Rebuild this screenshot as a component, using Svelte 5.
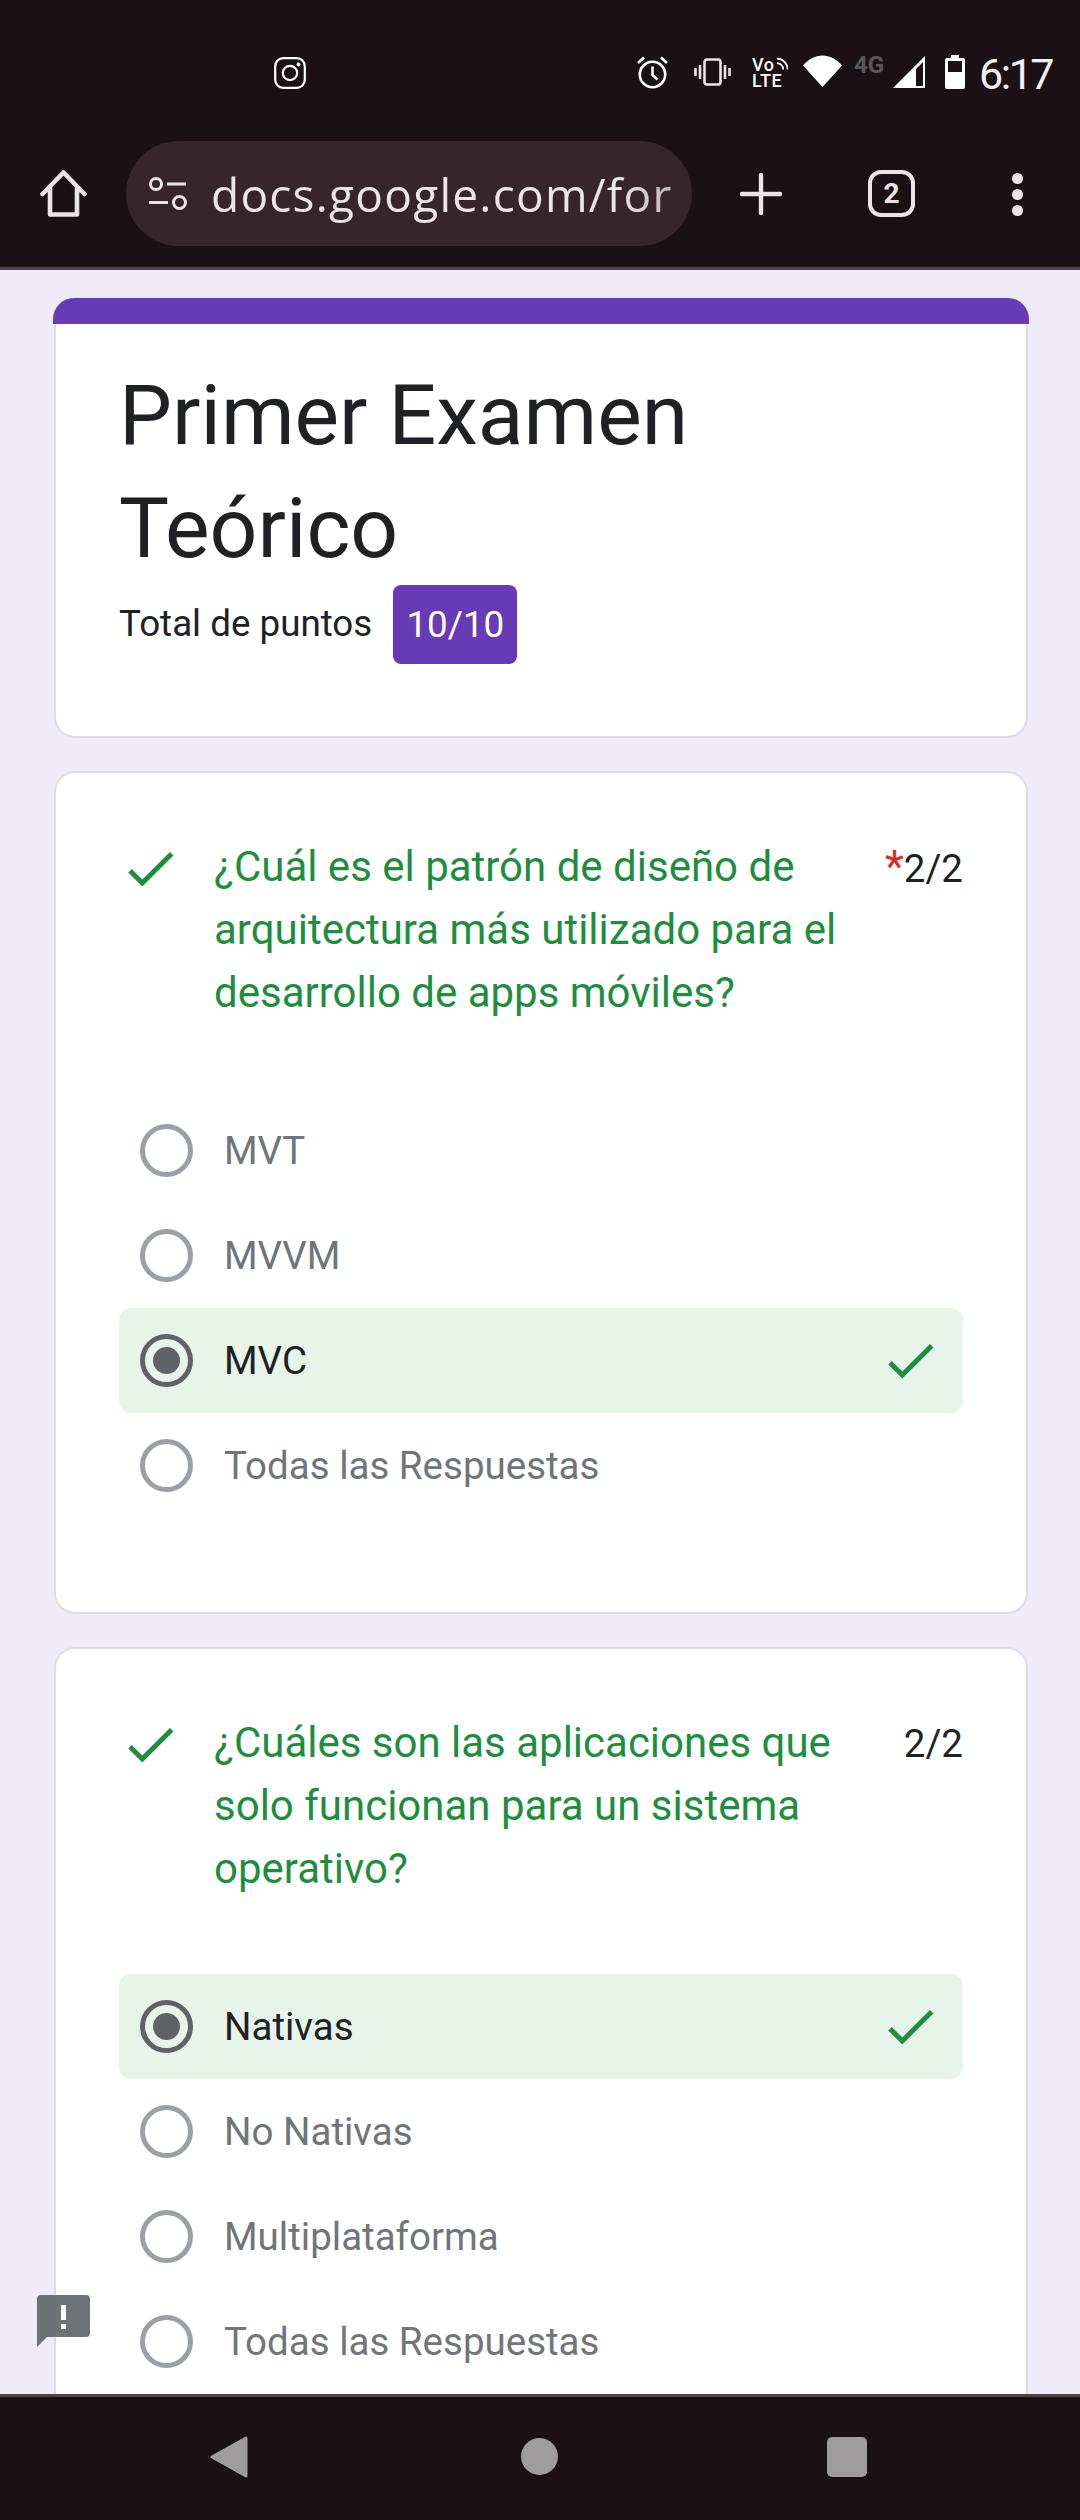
<script>
  const questions = [
    {
      text: '¿Cuál es el patrón de diseño de arquitectura más utilizado para el desarrollo de apps móviles?',
      required: true,
      options: ['MVT', 'MVVM', 'MVC', 'Todas las Respuestas'],
      selected: 2
    },
    {
      text: '¿Cuáles son las aplicaciones que solo funcionan para un sistema operativo?',
      required: false,
      options: ['Nativas', 'No Nativas', 'Multiplataforma', 'Todas las Respuestas'],
      selected: 0
    }
  ];
</script>

{#snippet check(cls)}
  <svg class={cls} viewBox="0 0 46 36" aria-hidden="true"><path d="M2 19.700 L14.300 32 L43.700 2.700" fill="none" stroke="#1e8e3e" stroke-width="5"/></svg>
{/snippet}

<div class="screen">
  <header class="chrome">
    <div class="status">
      <svg class="ig" viewBox="0 0 32 32"><rect x="1.200" y="1.200" width="29.600" height="29.600" rx="8" fill="none" stroke="#fff" stroke-width="2.200"/><circle cx="16" cy="16" r="7.200" fill="none" stroke="#fff" stroke-width="2.200"/><circle cx="24.500" cy="7.500" r="1.900" fill="#fff"/></svg>
      <div class="status-right">
        <svg class="alarm" viewBox="0 0 31 33"><circle cx="15.500" cy="18.500" r="12.700" fill="none" stroke="#fff" stroke-width="2.600"/><path d="M15.500 10.500v8.500l5 4.500M1 7l6-5.500M30 7l-6-5.500" fill="none" stroke="#fff" stroke-width="2.600"/></svg>
        <svg class="vib" viewBox="0 0 37 28"><rect x="10.500" y="1.500" width="16" height="25" rx="2.500" fill="none" stroke="#ebe5e6" stroke-width="2.600"/><path d="M6 7v14M1.500 10v8M31 7v14M35.500 10v8" stroke="#ebe5e6" stroke-width="2.600" fill="none"/></svg>
        <div class="volte">
          <div class="vo">Vo<svg viewBox="0 0 14 14"><path d="M1 6a7 7 0 0 1 7 7M1 1a12 12 0 0 1 12 12" fill="none" stroke="#fff" stroke-width="2"/></svg></div>
          <div class="lte">LTE</div>
        </div>
        <svg class="wifi" viewBox="0 0 39 32"><path d="M0 10.500 C11 -3 28 -3 39 10.500 L19.500 32 Z" fill="#fff"/></svg>
        <span class="net">4G</span>
        <svg class="signal" viewBox="0 0 32 32"><path d="M0 32 L32 0 V32 Z M23 30 H30 V6 L23 13 Z" fill="#fff" fill-rule="evenodd"/></svg>
        <svg class="batt" viewBox="0 0 20 34"><path d="M6 0h8v3h4a2 2 0 0 1 2 2v27a2 2 0 0 1-2 2H2a2 2 0 0 1-2-2V5a2 2 0 0 1 2-2h4Z M3 6v11h14V6Z" fill="#fff" fill-rule="evenodd"/></svg>
        <span class="time">6:17</span>
      </div>
    </div>
    <div class="toolbar">
      <svg class="home" viewBox="0 0 47 47"><path d="M2.500 24 L23.500 2.500 L44.500 24 M10 17.500 V44.500 H37 V17.500" fill="none" stroke="#ebe5e6" stroke-width="4.600" stroke-linejoin="round" stroke-linecap="round"/></svg>
      <div class="url">
        <svg class="tune" viewBox="0 0 40 33"><circle cx="8" cy="7" r="5.500" fill="none" stroke="#ebe5e6" stroke-width="3"/><circle cx="31.500" cy="25.500" r="6" fill="none" stroke="#ebe5e6" stroke-width="3"/><path d="M19 7h19M1 25.500h19" stroke="#ebe5e6" stroke-width="3.200" fill="none"/></svg>
        <span class="addr">docs.google.com/for</span>
      </div>
      <svg class="plus" viewBox="0 0 42 42"><path d="M21 2v38M2 21h38" stroke="#ebe5e6" stroke-width="4.400" stroke-linecap="round" fill="none"/></svg>
      <div class="tabs">2</div>
      <div class="menu"><i></i><i></i><i></i></div>
    </div>
  </header>

  <main class="page">
    <section class="card head">
      <div class="band"></div>
      <h1>Primer Examen Teórico</h1>
      <div class="total">
        <span class="total-label">Total de puntos</span>
        <span class="badge">10/10</span>
      </div>
    </section>

    {#each questions as q}
      <section class="card q">
        <div class="q-head">
          {@render check('q-check')}
          <div class="q-text">{q.text}</div>
          <div class="pts">{#if q.required}<span class="req">*</span>{/if}2/2</div>
        </div>
        <div class="opts">
          {#each q.options as opt, i}
            <div class="opt" class:sel={i === q.selected}>
              <span class="radio"></span>
              <span class="label">{opt}</span>
              {#if i === q.selected}{@render check('opt-check')}{/if}
            </div>
          {/each}
        </div>
      </section>
    {/each}

    <svg class="report" viewBox="0 0 53 52"><path d="M4 0h45a4 4 0 0 1 4 4v34a4 4 0 0 1-4 4H10L0 52V4a4 4 0 0 1 4-4Z" fill="#5f6368" fill-opacity=".9"/><path d="M24 10h5v15h-5zM24 29h5v5h-5z" fill="#fff"/></svg>
  </main>

  <nav class="sysnav">
    <svg class="back" viewBox="0 0 38 42"><path d="M36 2 V40 L2 21 Z" fill="#a09c9d" stroke="#a09c9d" stroke-width="3" stroke-linejoin="round"/></svg>
    <span class="dot"></span>
    <span class="sq"></span>
  </nav>
</div>

<style>
  :global(body) { margin: 0; background: #1b1114; }
  .screen {
    width: 1080px; height: 2520px; display: flex; flex-direction: column;
    overflow: hidden; font-family: Roboto, "Liberation Sans", sans-serif;
  }
  .chrome { background: #1b1114; height: 270px; box-sizing: border-box; border-bottom: 3px solid #524549; flex: none; }
  .status { height: 141px; box-sizing: border-box; padding: 57px 28px 0 274px; display: flex; justify-content: space-between; align-items: flex-start; }
  .ig { width: 32px; height: 32px; }
  .status-right { display: flex; align-items: flex-start; color: #fff; }
  .alarm { width: 31px; height: 33px; margin-top: -1px; }
  .vib { width: 37px; height: 28px; margin: 1px 0 0 26px; }
  .volte { width: 36px; margin-left: 21px; font-size: 18px; font-weight: 500; line-height: 16px; letter-spacing: .5px; }
  .vo { display: flex; height: 16px; }
  .vo svg { width: 14px; height: 14px; margin-left: 1px; }
  .wifi { width: 39px; height: 32px; margin: -2px 0 0 15px; }
  .net { width: 31px; margin-left: 12px; margin-top: -5px; font-size: 24px; line-height: 27px; font-weight: 700; color: #5b5558; }
  .signal { width: 32px; height: 32px; margin: -1px 0 0 8px; }
  .batt { width: 20px; height: 34px; margin: -2px 0 0 20px; }
  .time { font-size: 43px; line-height: 44px; letter-spacing: -2.500px; margin: -5px 0 0 14px; color: #f3eeef; }

  .toolbar { height: 126px; display: flex; align-items: flex-start; position: relative; }
  .home { width: 47px; height: 47px; margin: 29px 0 0 40px; flex: none; }
  .url {
    width: 566px; height: 105px; margin: 0 0 0 39px; border-radius: 53px; background: #36252a;
    display: flex; align-items: center; box-sizing: border-box; padding-left: 22px; flex: none;
  }
  .tune { width: 40px; height: 33px; flex: none; }
  .addr {
    margin-left: 23px; font-family: "Open Sans", sans-serif; font-size: 46px; letter-spacing: 1.250px; color: #ebe5e6;
    width: 463px; white-space: nowrap; overflow: hidden;
    -webkit-mask-image: linear-gradient(to right, #000 88%, rgba(0,0,0,.75) 100%);
    mask-image: linear-gradient(to right, #000 88%, rgba(0,0,0,.75) 100%);
  }
  .plus { width: 42px; height: 42px; margin: 32px 0 0 48px; flex: none; }
  .tabs {
    width: 47px; height: 47px; box-sizing: border-box; margin: 29px 0 0 86px; border: 4.500px solid #ebe5e6; border-radius: 13px;
    color: #ebe5e6; font-size: 28px; font-weight: 700; display: flex; align-items: center; justify-content: center; flex: none;
  }
  .menu { margin: 32px 0 0 97px; display: flex; flex-direction: column; gap: 5.500px; }
  .menu i { width: 10.500px; height: 10.500px; border-radius: 50%; background: #ebe5e6; display: block; }

  .page {
    flex: 1; min-height: 0; overflow: hidden; position: relative; background: #efebf9;
    padding: 28px 52px 0 54px; box-sizing: border-box; display: flex; flex-direction: column; gap: 33px;
  }
  .card { background: #fff; border: 2px solid #dcdce3; border-radius: 21px; flex: none; box-sizing: border-box; }
  .head { height: 440px; border-top: 0; padding: 0 63px; }
  .band { height: 26px; margin: 0 -66px 35px; background: #673ab7; border-radius: 21px 21px 0 0; }
  h1 { margin: 0; font-size: 84px; line-height: 113px; font-weight: 400; color: #202124; width: 700px; }
  .total { display: flex; align-items: center; font-size: 36.750px; color: #202124; gap: 21px; }
  .total-label { padding-bottom: 3px; }
  .badge { background: #673ab7; color: #fff; height: 79px; width: 124px; border-radius: 8px; display: flex; align-items: center; justify-content: center; }

  .q { padding: 62px 63px 94px; }
  .q-head { display: flex; align-items: flex-start; }
  .q-check { width: 46px; height: 36px; flex: none; margin: 16px 0 0 9px; }
  .q-text { flex: 1; margin-left: 40px; font-size: 42px; line-height: 63px; color: #1e8e3e; min-width: 0; padding-right: 30px; }
  .pts { flex: none; font-size: 38.500px; line-height: 63px; color: #202124; margin-top: 1px; white-space: nowrap; }
  .req { color: #d93025; font-size: 44px; }
  .opts { margin-top: 74px; display: flex; flex-direction: column; }
  .opt { height: 105px; display: flex; align-items: center; border-radius: 12px; padding-left: 21px; color: #70757a; font-size: 38.500px; }
  .opt.sel { background: #e6f4ea; color: #202124; }
  .radio { width: 53px; height: 53px; box-sizing: border-box; border: 5px solid #9aa0a6; border-radius: 50%; flex: none; position: relative; }
  .sel .radio { border-color: #5f6368; }
  .sel .radio::after { content: ""; position: absolute; inset: 8px; border-radius: 50%; background: #5f6368; }
  .label { margin-left: 31px; flex: 1; }
  .opt-check { width: 46px; height: 36px; flex: none; margin-right: 29px; }

  .report { position: absolute; left: 37px; top: 2025px; width: 53px; height: 52px; }
  .sysnav { height: 126px; flex: none; background: #1b1114; border-top: 3px solid #524549; box-sizing: border-box; position: relative; }
  .back { position: absolute; left: 210px; top: 39px; width: 38px; height: 42px; }
  .dot { position: absolute; left: 521px; top: 41px; width: 37px; height: 37px; border-radius: 50%; background: #a09c9d; }
  .sq { position: absolute; left: 827px; top: 40px; width: 40px; height: 40px; border-radius: 5px; background: #a09c9d; }
</style>
